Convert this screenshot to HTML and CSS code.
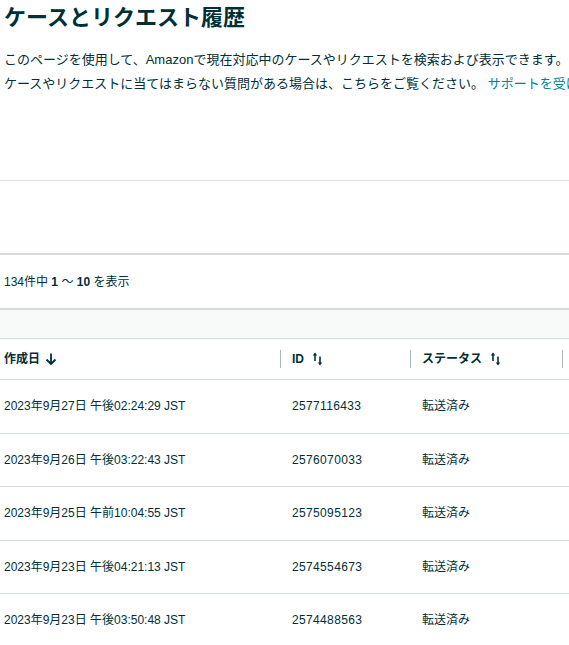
FILE: index.html
```html
<!DOCTYPE html>
<html lang="ja">
<head>
<meta charset="utf-8">
<title>ケースとリクエスト履歴</title>
<link rel="stylesheet" href="styles.css">
</head>
<body>
<div class="page">
  <h1 class="title">ケースとリクエスト履歴</h1>
  <div class="intro">
    <p class="line">このページを使用して、Amazonで現在対応中のケースやリクエストを検索および表示できます。</p>
    <p class="line">ケースやリクエストに当てはまらない質問がある場合は、こちらをご覧ください。 <a class="link" href="#">サポートを受ける</a></p>
  </div>
  <div class="search-area"></div>
  <div class="pager">134件中 <b>1</b> ～ <b>10</b> を表示</div>
  <div class="band"></div>
  <div class="table">
    <div class="row head">
      <div class="cell c1"><span class="hcell">作成日
        <svg class="ico-down" width="14" height="14" viewBox="0 0 14 14"><path d="M7 1.5V12M2.5 7.5L7 12l4.5-4.5" fill="none" stroke="#002f36" stroke-width="1.8"/></svg></span></div>
      <div class="cell c2"><span class="hcell sep">ID
        <svg class="ico-sort" width="11" height="16" viewBox="0 0 11 16"><path d="M3 2.5V10" stroke="#002f36" stroke-width="1.6"/><path d="M0.8 4.6L3 1.6 5.2 4.6Z" fill="#002f36"/><path d="M8 5.5V13" stroke="#002f36" stroke-width="1.6"/><path d="M5.8 11.4L8 14.4 10.2 11.4Z" fill="#002f36"/></svg></span></div>
      <div class="cell c3"><span class="hcell sep">ステータス
        <svg class="ico-sort" width="11" height="16" viewBox="0 0 11 16"><path d="M3 2.5V10" stroke="#002f36" stroke-width="1.6"/><path d="M0.8 4.6L3 1.6 5.2 4.6Z" fill="#002f36"/><path d="M8 5.5V13" stroke="#002f36" stroke-width="1.6"/><path d="M5.8 11.4L8 14.4 10.2 11.4Z" fill="#002f36"/></svg></span></div>
      <div class="cell c4"><span class="hcell sep"></span></div>
    </div>
    <div class="row">
      <div class="cell c1">2023年9月27日 午後02:24:29 JST</div>
      <div class="cell c2 num">2577116433</div>
      <div class="cell c3">転送済み</div>
      <div class="cell c4"></div>
    </div>
    <div class="row">
      <div class="cell c1">2023年9月26日 午後03:22:43 JST</div>
      <div class="cell c2 num">2576070033</div>
      <div class="cell c3">転送済み</div>
      <div class="cell c4"></div>
    </div>
    <div class="row">
      <div class="cell c1">2023年9月25日 午前10:04:55 JST</div>
      <div class="cell c2 num">2575095123</div>
      <div class="cell c3">転送済み</div>
      <div class="cell c4"></div>
    </div>
    <div class="row">
      <div class="cell c1">2023年9月23日 午後04:21:13 JST</div>
      <div class="cell c2 num">2574554673</div>
      <div class="cell c3">転送済み</div>
      <div class="cell c4"></div>
    </div>
    <div class="row">
      <div class="cell c1">2023年9月23日 午後03:50:48 JST</div>
      <div class="cell c2 num">2574488563</div>
      <div class="cell c3">転送済み</div>
      <div class="cell c4"></div>
    </div>
  </div>
</div>
</body>
</html>
```
FILE: styles.css
```css
html, body {
  margin: 0;
  padding: 0;
  background: #ffffff;
}
body {
  font-family: "Liberation Sans", "Noto Sans CJK JP", sans-serif;
  color: #002f36;
  overflow: hidden;
}
.page {
  width: 600px;
}
.title {
  margin: 0;
  padding: 4px 0 0 4px;
  font-size: 22px;
  line-height: 28px;
  font-weight: bold;
  white-space: nowrap;
}
.intro {
  padding: 16px 0 84px 4px;
}
.line {
  margin: 0;
  font-size: 13px;
  line-height: 24px;
  white-space: nowrap;
}
.link {
  color: #008296;
  text-decoration: none;
}
.search-area {
  height: 72px;
  border-top: 1px solid #dfe3e3;
  border-bottom: 2px solid #d5dbdb;
}
.pager {
  height: 53px;
  display: flex;
  align-items: center;
  padding-left: 4px;
  font-size: 12px;
  line-height: 16px;
  white-space: pre;
  border-bottom: 2px solid #d5dbdb;
}
.pager b {
  font-weight: bold;
}
.band {
  height: 28px;
  background: #f8f9f9;
  border-bottom: 1px solid #d5dbdb;
}
.row {
  display: flex;
  box-sizing: border-box;
  height: 53.5px;
  border-bottom: 1px solid #d5dbdb;
  font-size: 12px;
  line-height: 16px;
}
.row.head {
  height: 41px;
  font-weight: bold;
}
.cell {
  display: flex;
  align-items: center;
  box-sizing: border-box;
  white-space: nowrap;
}
.c1 {
  width: 280px;
  padding-left: 4px;
}
.c2 {
  width: 130px;
  padding-left: 12px;
}
.row.head .c2,
.row.head .c3,
.row.head .c4 {
  padding-left: 0;
}
.c3 {
  width: 152px;
  padding-left: 12px;
}
.c4 {
  flex: 1;
}
.num {
  letter-spacing: 0.35px;
}
.hcell {
  display: flex;
  align-items: center;
  height: 18px;
}
.hcell.sep {
  border-left: 1px solid #aab7b8;
  padding-left: 11px;
}
.ico-down {
  margin-left: 4px;
}
.ico-sort {
  margin-left: 8px;
}
```
